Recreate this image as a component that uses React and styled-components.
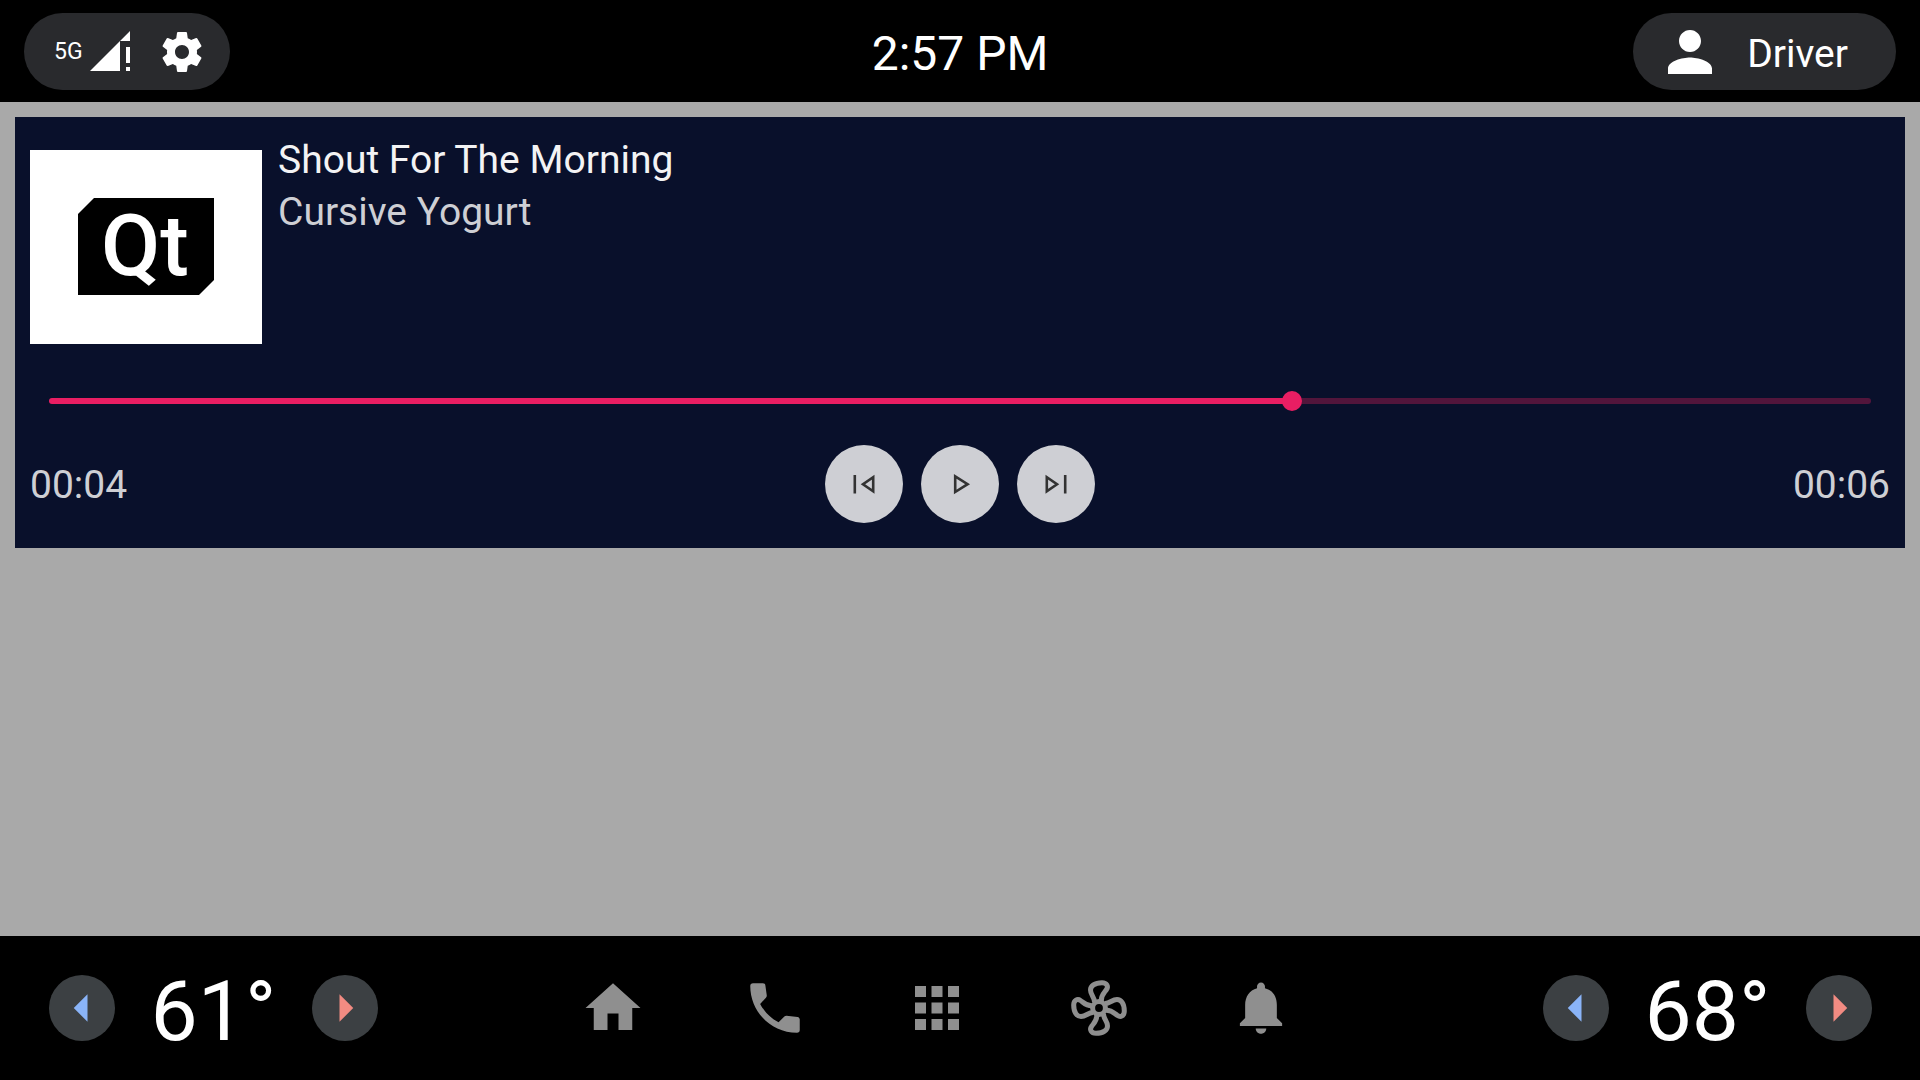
import { useState } from "react";
import styled, { createGlobalStyle } from "styled-components";

const GlobalStyle = createGlobalStyle`
  * {
    box-sizing: border-box;
  }

  body {
    margin: 0;
    background: #a9a9a9;
    color: #fff;
    font-family: Roboto, "Noto Sans", sans-serif;
  }

  button,
  input {
    font: inherit;
  }
`;

const gear =
  "M19.43 12.98c.04-.32.07-.64.07-.98s-.03-.66-.07-.98l2.11-1.65c.19-.15.24-.42.12-.64l-2-3.46c-.12-.22-.39-.3-.61-.22l-2.49 1c-.52-.4-1.08-.73-1.69-.98l-.38-2.65C14.46 2.18 14.25 2 14 2h-4c-.25 0-.46.18-.49.42l-.38 2.65c-.61.25-1.17.59-1.69.98l-2.49-1c-.23-.09-.49 0-.61.22l-2 3.46c-.13.22-.07.49.12.64l2.11 1.65c-.04.32-.07.65-.07.98s.03.66.07.98l-2.11 1.65c-.19.15-.24.42-.12.64l2 3.46c.12.22.39.3.61.22l2.49-1c.52.4 1.08.73 1.69.98l.38 2.65c.03.24.24.42.49.42h4c.25 0 .46-.18.49-.42l.38-2.65c.61-.25 1.17-.59 1.69-.98l2.49 1c.23.09.49 0 .61-.22l2-3.46c.12-.22.07-.49-.12-.64l-2.11-1.65zM12 15.5c-1.93 0-3.5-1.57-3.5-3.5s1.57-3.5 3.5-3.5 3.5 1.57 3.5 3.5-1.57 3.5-3.5 3.5z";
const person =
  "M12 12c2.21 0 4-1.79 4-4s-1.79-4-4-4-4 1.79-4 4 1.79 4 4 4zm0 2c-2.67 0-8 1.34-8 4v2h16v-2c0-2.66-5.33-4-8-4z";
const home = "M10 20v-6h4v6h5v-8h3L12 3 2 12h3v8z";
const phone =
  "M4 3h3.6c.5 0 .9.3.9.8l.5 3.6c.05.3-.05.6-.3.9l-2.1 2.2c1.5 2.9 3.8 5.2 6.7 6.7l2.1-2.1c.2-.2.5-.3.8-.3l4 .5c.5.1.8.5.8.9V20c0 .6-.4 1-1 1C10.6 21 3 13.4 3 4c0-.6.4-1 1-1z";
const apps =
  "M4 8h4V4H4v4zm6 12h4v-4h-4v4zm-6 0h4v-4H4v4zm0-6h4v-4H4v4zm6 0h4v-4h-4v4zm6-10v4h4V4h-4zm-6 4h4V4h-4v4zm6 6h4v-4h-4v4zm0 6h4v-4h-4v4z";
const bell =
  "M12 22c1.1 0 2-.9 2-2h-4c0 1.1.9 2 2 2zm6-6v-5c0-3.07-1.63-5.64-4.5-6.32V4c0-.83-.67-1.5-1.5-1.5s-1.5.67-1.5 1.5v.68C7.64 5.36 6 7.92 6 11v5l-2 2v1h16v-1l-2-2z";

const Icon = ({ path, size = 66, viewBox = "0 0 24 24" }) => (
  <svg width={size} height={size} viewBox={viewBox} fill="currentColor" aria-hidden="true">
    <path d={path} />
  </svg>
);

const SignalIcon = () => (
  <svg width="40" height="42" viewBox="0 0 40 42" fill="currentColor" aria-hidden="true">
    <path d="M0 40L30 10V40zM40 0V10H30zM36 16h4v16h-4zM36 36h4v4h-4z" />
  </svg>
);

const FanIcon = () => (
  <svg
    width="66"
    height="66"
    viewBox="-33 -33 66 66"
    fill="none"
    stroke="currentColor"
    strokeWidth="5"
    aria-hidden="true"
  >
    <circle r="6.4" />
    {[0, 90, 180, 270].map((angle) => (
      <path
        key={angle}
        transform={`rotate(${angle})`}
        d="M-4.5-6C-4.5-11-8.5-13-8.5-18C-8.5-22-4.5-25.3 3-25.3C8-25.3 9.6-21.5 7.5-18.5C5.5-15.5 2-13 2.2-7"
      />
    ))}
  </svg>
);

const QtLogo = () => (
  <svg width="232" height="194" viewBox="-48 -48 232 194" role="img" aria-label="Qt">
    <path d="M16 0H136V82L121 97H0V16z" fill="#000" />
    <text x="23" y="77" fill="#fff" fontFamily="Roboto" fontWeight="500" fontSize="86">
      Qt
    </text>
  </svg>
);

const MediaIcon = ({ children }) => (
  <svg
    width="32"
    height="32"
    viewBox="-16 -16 32 32"
    fill="none"
    stroke="#333"
    strokeWidth="2.6"
    aria-hidden="true"
  >
    {children}
  </svg>
);

const Temperature = ({ value, zone }) => {
  const [degrees, setDegrees] = useState(value);
  return (
    <Climate>
      <TempButton $color="#8ab4f8" aria-label={`${zone} cooler`} onClick={() => setDegrees(degrees - 1)}>
        <Icon path="M14 7l-5 5 5 5V7z" />
      </TempButton>
      <Degrees>{degrees}°</Degrees>
      <TempButton $color="#f28b82" aria-label={`${zone} warmer`} onClick={() => setDegrees(degrees + 1)}>
        <Icon path="M10 17l5-5-5-5v10z" />
      </TempButton>
    </Climate>
  );
};

const App = () => {
  const [position, setPosition] = useState(684);

  return (
    <Screen>
      <GlobalStyle />
      <TopBar>
        <StatusPill aria-label="Network and settings">
          <Network>5G</Network>
          <SignalIcon />
          <Icon path={gear} size={48} />
        </StatusPill>
        <Clock>2:57 PM</Clock>
        <DriverPill>
          <Icon path={person} />
          <DriverName>Driver</DriverName>
        </DriverPill>
      </TopBar>

      <Main>
        <Player>
          <Track>
            <Cover>
              <QtLogo />
            </Cover>
            <div>
              <Title>Shout For The Morning</Title>
              <Artist>Cursive Yogurt</Artist>
            </div>
          </Track>
          <Seek
            type="range"
            min="0"
            max="1000"
            value={position}
            onChange={(e) => setPosition(Number(e.target.value))}
            aria-label="Playback position"
            style={{ "--played": `${position / 10}%` }}
          />
          <Controls>
            <Time>00:04</Time>
            <Buttons>
              <RoundButton aria-label="Previous">
                <MediaIcon>
                  <path d="M-9.2-9V9.4M9.2-6.8V7.2L-1 .2z" />
                </MediaIcon>
              </RoundButton>
              <RoundButton aria-label="Play">
                <MediaIcon>
                  <path d="M-4.8-7.6V8L7.6.2z" />
                </MediaIcon>
              </RoundButton>
              <RoundButton aria-label="Next">
                <MediaIcon>
                  <path d="M9.2-9V9.4M-9.2-6.8V7.2L1 .2z" />
                </MediaIcon>
              </RoundButton>
            </Buttons>
            <Time $end>00:06</Time>
          </Controls>
        </Player>
      </Main>

      <BottomBar>
        <Temperature value={61} zone="Left" />
        <Nav>
          <NavButton aria-label="Home">
            <Icon path={home} />
          </NavButton>
          <NavButton aria-label="Phone">
            <Icon path={phone} />
          </NavButton>
          <NavButton aria-label="Apps">
            <Icon path={apps} />
          </NavButton>
          <NavButton aria-label="Climate">
            <FanIcon />
          </NavButton>
          <NavButton aria-label="Notifications">
            <Icon path={bell} viewBox="-0.5 -0.3 25 25" />
          </NavButton>
        </Nav>
        <Temperature value={68} zone="Right" />
      </BottomBar>
    </Screen>
  );
};

const Screen = styled.div`
  min-height: 100vh;
  display: flex;
  flex-direction: column;

  svg {
    display: block;
    flex: none;
  }
`;

const TopBar = styled.header`
  display: grid;
  grid-template-columns: 1fr auto 1fr;
  align-items: center;
  padding: 13px 24px 12px;
  background: #000;
`;

const Pill = styled.button`
  display: flex;
  align-items: center;
  height: 77px;
  border: 0;
  border-radius: 39px;
  background: #292a2d;
  color: #fff;
`;

const StatusPill = styled(Pill)`
  justify-self: start;
  padding: 0 24px 0 30px;

  svg:last-child {
    margin-left: 28px;
  }
`;

const Network = styled.span`
  width: 36px;
  font-size: 23px;
  text-align: left;
`;

const DriverPill = styled(Pill)`
  justify-self: end;
  gap: 24px;
  padding: 0 48px 0 24px;
  font-size: 39px;
`;

const DriverName = styled.span`
  padding-top: 4px;
`;

const Clock = styled.time`
  padding-top: 4px;
  font-size: 48px;
  line-height: 56px;
`;

const Main = styled.main`
  flex: 1;
  padding: 15px;
`;

const Player = styled.section`
  padding: 15px 15px 25px;
  background: #09102b;
`;

const Track = styled.div`
  display: flex;
  gap: 16px;
  min-height: 230px;
`;

const Cover = styled.div`
  align-self: center;
  background: #fff;
`;

const Title = styled.h1`
  margin: 2px 0 0;
  color: #f3f3f4;
  font-size: 39px;
  font-weight: 400;
  line-height: 52px;
`;

const Artist = styled.p`
  margin: 0;
  color: #cecfd4;
  font-size: 39px;
  line-height: 52px;
`;

const Seek = styled.input`
  display: block;
  width: calc(100% - 38px);
  height: 78px;
  margin: 0 19px 5px;
  appearance: none;
  background: transparent;

  &::-webkit-slider-runnable-track {
    height: 6px;
    border-radius: 3px;
    background: linear-gradient(to right, #e91e63 var(--played), #52153b var(--played));
  }

  &::-webkit-slider-thumb {
    appearance: none;
    width: 20px;
    height: 20px;
    margin-top: -7px;
    border-radius: 50%;
    background: #e91e63;
  }
`;

const Controls = styled.div`
  display: grid;
  grid-template-columns: 1fr auto 1fr;
  align-items: center;
`;

const Time = styled.span`
  padding-top: 2px;
  color: #cecfd4;
  font-size: 39px;
  text-align: ${({ $end }) => ($end ? "right" : "left")};
`;

const Buttons = styled.div`
  display: flex;
  gap: 18px;
`;

const RoundButton = styled.button`
  display: flex;
  align-items: center;
  justify-content: center;
  width: 78px;
  height: 78px;
  padding: 0;
  border: 0;
  border-radius: 50%;
  background: #cecfd4;
`;

const BottomBar = styled.footer`
  display: flex;
  align-items: center;
  justify-content: space-between;
  height: 144px;
  padding: 0 48px 0 49px;
  background: #000;
`;

const Climate = styled.div`
  display: flex;
  align-items: center;
`;

const TempButton = styled.button`
  width: 66px;
  height: 66px;
  padding: 0;
  border: 0;
  border-radius: 50%;
  background: #3c4043;
  color: ${({ $color }) => $color};
`;

const Degrees = styled.span`
  width: 197px;
  padding-top: 8px;
  font-size: 84px;
  line-height: 98px;
  text-align: center;
`;

const Nav = styled.nav`
  display: flex;
  gap: 96px;
  margin-right: 48px;
`;

const NavButton = styled.button`
  padding: 0;
  border: 0;
  background: none;
  color: #8f8f8f;
`;

export default App;
